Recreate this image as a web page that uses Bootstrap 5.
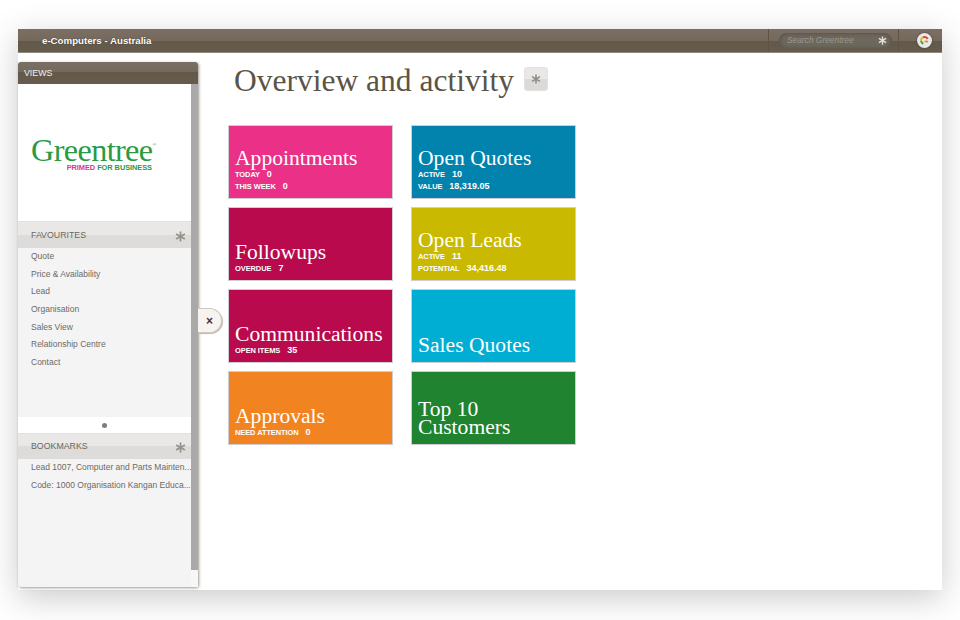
<!doctype html>
<html lang="en"><head><meta charset="utf-8"><title>Greentree</title>
<link href="https://cdn.jsdelivr.net/npm/bootstrap@5.3.0/dist/css/bootstrap.min.css" rel="stylesheet">
<style>
html,body{height:100%;}
body{background:#fff;font-family:"Liberation Sans",Arial,sans-serif;overflow:hidden;}
.app-window{width:924px;height:561px;margin:29px 0 0 18px;box-shadow:0 8px 30px rgba(70,70,70,.28);background:#fff;position:relative;}
.top-strip{height:24px;background:linear-gradient(#7a6f62 0,#74695c 50%,#635949 50%,#665c4e 100%);border-bottom:1px solid #8f887c;color:#fff;font-size:9.7px;font-weight:700;text-shadow:0 0 1px #222;}
.brand-name{padding:2px 0 0 24px;}
.search-zone{width:131px;height:100%;border-left:1px solid #5d5446;border-right:1px solid #5d5446;margin-right:18px;padding:0 6px 0 10px;margin-left:auto;}
.search-pill{height:16px;width:100%;border-radius:8px;background:#6d685e;box-shadow:inset 0 0 4px #4f483c;padding:0 5px 0 8px;color:#9c978c;font-size:8.4px;font-style:italic;font-weight:400;text-shadow:none;}
.user-orb{width:15px;height:15px;margin-right:10px;border-radius:50%;background:#e8e8e6;box-shadow:0 0 2px #333;}
.work-area{height:537px;}
.side-panel{width:180px;margin-top:9px;height:525px;background:#f4f4f4;border-radius:3px;box-shadow:1px 1px 3px rgba(80,70,50,.55);position:relative;}
.views-head{height:22px;background:linear-gradient(#7a6f62 0,#74695c 45%,#635949 45%,#665c4e 100%);color:#f3f1ee;font-size:8.8px;padding:1px 0 0 6px;border-radius:3px 3px 0 0;}
.panel-body{width:173px;flex:none;}
.track-side{width:7px;background:#a9a9a9;}
.track-end{height:17px;background:#f7f7f7;}
.logo-box{height:137px;background:#fff;padding-left:13px;}
.logo-word{font-family:"Liberation Serif",serif;color:#2a9a43;font-size:32.2px;line-height:24px;letter-spacing:-.6px;padding-top:4px;box-sizing:content-box;}
.logo-word sup{font-size:5px;top:-15px;letter-spacing:0;}
.logo-tag{font-size:7.4px;font-weight:700;color:#2a9a43;line-height:9px;text-align:right;width:121px;letter-spacing:-.05px;padding-top:1px;box-sizing:content-box;}
.logo-tag span{color:#e0368c;}
.section-head{height:27px;background:linear-gradient(#e9e8e6 0,#e9e8e6 50%,#dddcda 50%,#dddcda 100%);border-top:1px solid #e2e1df;color:#6b675f;font-size:8.8px;padding:2px 5px 0 13px;}
.section-head.shorter{height:26px;padding-top:1px;}
.nav-links{list-style:none;margin:0;padding:0 0 0 13px;color:#6d6a64;font-size:8.5px;}
.nav-links li{height:17.65px;line-height:17.65px;white-space:nowrap;overflow:hidden;}
.fav-list{height:169px;background:#f4f4f4;}
.divider-dot{height:16px;background:#fff;}
.divider-dot i{width:5px;height:5px;border-radius:50%;background:#7d7d7d;display:block;}
.collapse-tab{position:absolute;left:180px;top:246px;width:24px;height:25px;background:#f7f3f1;border-radius:0 13px 13px 0;border:1px solid #cfcabf;border-left:0;box-shadow:1px 1px 1px #bdb8ae;color:#4b3038;font-size:12px;font-weight:700;line-height:1;}
.main-pane{padding:0 0 0 36px;flex:1;}
.page-title{font-family:"Liberation Serif",serif;color:#5b5446;font-size:31.5px;line-height:40px;font-weight:400;margin:8px 0 0;}
.star-btn{width:24px;height:24px;background:linear-gradient(#e9e8e6 0,#e9e8e6 50%,#dbdad8 50%,#dbdad8 100%);border-radius:3px;border:1px solid #e2e1df;margin:3px 0 0 10px;}
.tile-grid{display:grid;grid-template-columns:165px 165px;grid-auto-rows:74px;column-gap:18px;row-gap:8px;margin:0 0 0 -6px;padding-top:24px;}
.tile{color:#fff;padding:0 6px 6px;border:1px solid #cfcdd3;justify-content:flex-end;}
.tile-title{font-family:"Liberation Serif",serif;font-size:21.6px;line-height:21px;}
.tile-title.two{line-height:18px;padding-bottom:2px;}
.tile-row{font-size:7.5px;line-height:11.5px;font-weight:700;white-space:nowrap;letter-spacing:-.1px;}
.tile-row b{font-size:9px;margin-left:5px;letter-spacing:0;}
.tile-pink{background:#ea3087;}.tile-blue{background:#0183ad;}.tile-crimson{background:#b80a4c;}.tile-olive{background:#c9b900;}
.tile-sky{background:#00aed4;}.tile-orange{background:#f18420;}.tile-green{background:#20832f;}
</style></head><body>
<svg width="0" height="0" class="d-block" aria-hidden="true"><symbol id="ast" viewBox="0 0 12 12"><path d="M6 .5V11.5M1.2 3.2 10.8 8.8M1.2 8.8 10.8 3.2" fill="none" stroke="currentColor" stroke-width="1.9"/></symbol></svg>
<div class="app-window">
 <div class="top-strip d-flex align-items-center">
  <div class="brand-name">e-Computers - Australia</div>
  <div class="search-zone d-flex align-items-center">
   <div class="search-pill d-flex align-items-center justify-content-between"><span>Search Greentree</span><svg width="9" height="9" style="color:#e4e1da"><use href="#ast"/></svg></div>
  </div>
  <svg class="user-orb" viewBox="0 0 15 15"><path d="M10.7 6A3.5 3.5 0 0 0 6 4.3" fill="none" stroke="#d8453a" stroke-width="1.9"/><path d="M6 4.3A3.5 3.5 0 0 0 4.1 8" fill="none" stroke="#e5b52e" stroke-width="1.9"/><path d="M4.1 8A3.5 3.5 0 0 0 6.3 10.8" fill="none" stroke="#3b9a4c" stroke-width="1.9"/><path d="M7.6 8.4 11 8.6" stroke="#e98a2a" stroke-width="1.9"/></svg>
 </div>
 <div class="work-area d-flex">
  <aside class="side-panel d-flex flex-column flex-shrink-0">
   <div class="views-head d-flex align-items-center">VIEWS</div>
   <div class="d-flex flex-grow-1">
    <div class="panel-body d-flex flex-column">
     <div class="logo-box d-flex flex-column justify-content-center">
      <div class="logo-word">Greentree<sup>®</sup></div>
      <div class="logo-tag"><span>PRIMED</span> FOR BUSINESS</div>
     </div>
     <div class="section-head d-flex align-items-center justify-content-between"><span>FAVOURITES</span><svg width="11" height="11" style="color:#96938c"><use href="#ast"/></svg></div>
     <ul class="nav-links fav-list">
      <li>Quote</li><li>Price &amp; Availability</li><li>Lead</li><li>Organisation</li><li>Sales View</li><li>Relationship Centre</li><li>Contact</li>
     </ul>
     <div class="divider-dot d-flex align-items-center justify-content-center"><i></i></div>
     <div class="section-head shorter d-flex align-items-center justify-content-between"><span>BOOKMARKS</span><svg width="11" height="11" style="color:#96938c"><use href="#ast"/></svg></div>
     <ul class="nav-links">
      <li>Lead 1007, Computer and Parts Mainten...</li><li>Code: 1000 Organisation Kangan Educa...</li>
     </ul>
    </div>
    <div class="track-side d-flex flex-column justify-content-end"><div class="track-end"></div></div>
   </div>
   <div class="collapse-tab d-flex align-items-center justify-content-center">×</div>
  </aside>
  <main class="main-pane">
   <div class="d-flex align-items-center">
    <h1 class="page-title">Overview and activity</h1>
    <div class="star-btn d-flex align-items-center justify-content-center"><svg width="10" height="10" style="color:#8f8c86"><use href="#ast"/></svg></div>
   </div>
   <div class="tile-grid">
    <div class="tile tile-pink d-flex flex-column"><div class="tile-title">Appointments</div><div class="tile-row">TODAY <b>0</b></div><div class="tile-row">THIS WEEK <b>0</b></div></div>
    <div class="tile tile-blue d-flex flex-column"><div class="tile-title">Open Quotes</div><div class="tile-row">ACTIVE <b>10</b></div><div class="tile-row">VALUE <b>18,319.05</b></div></div>
    <div class="tile tile-crimson d-flex flex-column"><div class="tile-title">Followups</div><div class="tile-row">OVERDUE <b>7</b></div></div>
    <div class="tile tile-olive d-flex flex-column"><div class="tile-title">Open Leads</div><div class="tile-row">ACTIVE <b>11</b></div><div class="tile-row">POTENTIAL <b>34,416.48</b></div></div>
    <div class="tile tile-crimson d-flex flex-column"><div class="tile-title">Communications</div><div class="tile-row">OPEN ITEMS <b>35</b></div></div>
    <div class="tile tile-sky d-flex flex-column"><div class="tile-title">Sales Quotes</div></div>
    <div class="tile tile-orange d-flex flex-column"><div class="tile-title">Approvals</div><div class="tile-row">NEED ATTENTION <b>0</b></div></div>
    <div class="tile tile-green d-flex flex-column"><div class="tile-title two">Top 10<br>Customers</div></div>
   </div>
  </main>
 </div>
</div>
<script src="https://cdn.jsdelivr.net/npm/bootstrap@5.3.0/dist/js/bootstrap.bundle.min.js"></script>
</body></html>
